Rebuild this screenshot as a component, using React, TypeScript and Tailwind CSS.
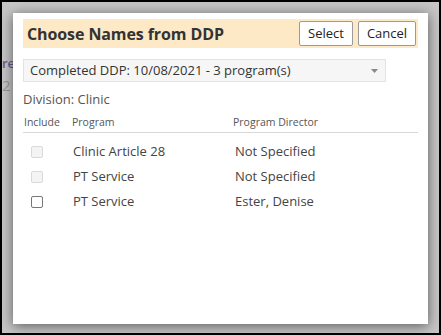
const rows = [
  { program: 'Clinic Article 28', director: 'Not Specified', disabled: true },
  { program: 'PT Service', director: 'Not Specified', disabled: true },
  { program: 'PT Service', director: 'Ester, Denise', disabled: false },
]

export default function App() {
  return (
    <div className="relative w-[441px] h-[335px] overflow-hidden border-2 border-black bg-[#c6c6c6] font-['Open_Sans',sans-serif]">
      {/* page peeking behind the modal */}
      <div className="absolute left-0 top-[52px] text-[13px] font-semibold text-[#6b5b95]">re</div>
      <div className="absolute left-0 top-[72px] text-[15px] text-[#9a9a9a]">2</div>

      {/* Dialog */}
      <div className="absolute left-[11px] top-[11px] w-[415px] h-[311px] bg-white px-[10px] pt-[6px] shadow-[0_2px_12px_rgba(0,0,0,0.55)]">
        <div className="flex items-center justify-between h-[29px] bg-[#fde9c6] pl-[4px] pr-[2px]">
          <h1 className="text-[16px] font-bold text-[#333] tracking-[-0.1px]">Choose Names from DDP</h1>
          <div className="flex gap-[5px]">
            <button className="h-[25px] w-[54px] border border-[#9a9a9a] bg-white text-[13px] text-[#222] rounded-[2px]">Select</button>
            <button className="h-[25px] w-[58px] border border-[#9a9a9a] bg-white text-[13px] text-[#222] rounded-[2px]">Cancel</button>
          </div>
        </div>

        <div className="mt-[11px] flex items-center justify-between w-[363px] h-[23px] border border-[#e3e3e3] bg-[#f6f6f6] pl-[6px] pr-[7px] text-[13px] text-[#333]">
          <span>Completed DDP: 10/08/2021 - 3 program(s)</span>
          <svg width="7" height="4" viewBox="0 0 7 4"><path d="M0 0h7L3.5 4z" fill="#888" /></svg>
        </div>

        <div className="mt-[8px] text-[13px] text-[#555] leading-[18px]">Division: Clinic</div>

        <div className="mt-[6px] flex text-[10.5px] text-[#555] border-b border-[#d8d8d8] pb-[2px] leading-[16px]">
          <span className="w-[49px] pl-px">Include</span>
          <span className="w-[161px]">Program</span>
          <span>Program Director</span>
        </div>

        <div className="mt-[10px] flex flex-col gap-[7px]">
          {rows.map((r, i) => (
            <div key={i} className="flex items-center h-[18px] text-[13px] text-[#444]">
              <div className="w-[50px] pl-[8px]">
                <div className={`w-[12px] h-[12px] rounded-[2px] border ${r.disabled ? 'border-[#d9d9d9] bg-[#f4f4f4]' : 'border-[#777] bg-white'}`} />
              </div>
              <span className="w-[162px]">{r.program}</span>
              <span>{r.director}</span>
            </div>
          ))}
        </div>
      </div>
    </div>
  )
}
